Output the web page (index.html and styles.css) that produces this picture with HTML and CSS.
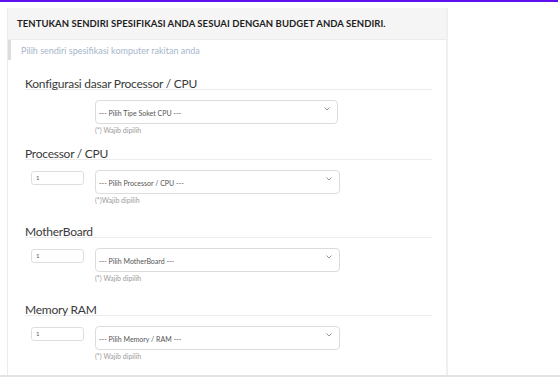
FILE: index.html
```html
<!DOCTYPE html>
<html lang="id">
<head>
<meta charset="utf-8">
<title>Rakit PC</title>
<link rel="stylesheet" href="styles.css">
</head>
<body>
<div class="topbar"></div>
<div class="viewport">
  <div class="panel">
    <div class="panel-heading">TENTUKAN SENDIRI SPESIFIKASI ANDA SESUAI DENGAN BUDGET ANDA SENDIRI.</div>
    <div class="panel-note">Pilih sendiri spesifikasi komputer rakitan anda</div>
    <div class="panel-body">
      <div class="group group-first">
        <h4 class="group-title">Konfigurasi dasar Processor / CPU</h4>
        <div class="row">
          <div class="qty-cell"></div>
          <div class="field field-narrow">
            <div class="select"><span>--- Pilih Tipe Soket CPU ---</span><svg class="chev" viewBox="0 0 6 4" width="6" height="4"><polyline points="0.5,0.5 3,3 5.5,0.5"/></svg></div>
            <div class="hint">(*) Wajib dipilih</div>
          </div>
        </div>
      </div>
      <div class="group">
        <h4 class="group-title">Processor / CPU</h4>
        <div class="row">
          <div class="qty-cell"><div class="qty">1</div></div>
          <div class="field">
            <div class="select"><span>--- Pilih Processor / CPU ---</span><svg class="chev" viewBox="0 0 6 4" width="6" height="4"><polyline points="0.5,0.5 3,3 5.5,0.5"/></svg></div>
            <div class="hint">(*)Wajib dipilih</div>
          </div>
        </div>
      </div>
      <div class="group">
        <h4 class="group-title">MotherBoard</h4>
        <div class="row">
          <div class="qty-cell"><div class="qty">1</div></div>
          <div class="field">
            <div class="select"><span>--- Pilih MotherBoard ---</span><svg class="chev" viewBox="0 0 6 4" width="6" height="4"><polyline points="0.5,0.5 3,3 5.5,0.5"/></svg></div>
            <div class="hint">(*) Wajib dipilih</div>
          </div>
        </div>
      </div>
      <div class="group">
        <h4 class="group-title">Memory RAM</h4>
        <div class="row">
          <div class="qty-cell"><div class="qty">1</div></div>
          <div class="field">
            <div class="select"><span>--- Pilih Memory / RAM ---</span><svg class="chev" viewBox="0 0 6 4" width="6" height="4"><polyline points="0.5,0.5 3,3 5.5,0.5"/></svg></div>
            <div class="hint">(*) Wajib dipilih</div>
          </div>
        </div>
      </div>
    </div>
  </div>
</div>
</body>
</html>
```

FILE: styles.css
```css
* { box-sizing: border-box; }
html, body { margin: 0; padding: 0; background: #fff; }
body {
  font-family: Lato, "Open Sans", "Liberation Sans", sans-serif;
  color: #333;
  width: 560px;
  height: 379px;
  overflow: hidden;
}
.topbar {
  width: 558px;
  height: 2px;
  background: #5f10ee;
}
.viewport {
  height: 375px;
  border-bottom: 2px solid #e3e3e3;
  overflow: hidden;
  padding: 6px 0 0 7px;
}
.panel {
  width: 441px;
  border-left: 1px solid #ececec;
  border-right: 2px solid #efefef;
  min-height: 400px;
}
.panel-heading {
  height: 32px;
  background: #f5f5f5;
  border-bottom: 1px solid #ebebeb;
  padding: 0 9px;
  display: flex;
  align-items: center;
  font-size: 9.5px;
  font-weight: 700;
  color: #1e1e1e;
  letter-spacing: 0.05px;
}
.panel-note {
  height: 20px;
  border-left: 3px solid #dcdcdc;
  padding-left: 10px;
  display: flex;
  align-items: center;
  font-size: 9px;
  color: #a7b6cc;
}
.panel-body {
  padding: 0 14px 0 17px;
}
.group { margin-bottom: 20px; }
.group-first { margin-top: 16px; margin-bottom: 12px; }
.group-title {
  margin: 0;
  font-size: 12px;
  font-weight: 400;
  line-height: 15px;
  height: 14px;
  color: #3a3a3a;
  border-bottom: 1px solid #ececec;
  white-space: nowrap;
  letter-spacing: -0.25px;
}
.row {
  display: flex;
  margin-top: 10px;
}
.qty-cell {
  width: 70px;
  flex: none;
  padding-left: 6px;
  padding-top: 1px;
}
.qty {
  width: 53px;
  height: 14px;
  border: 1px solid #dedede;
  border-radius: 3px;
  font-size: 6px;
  line-height: 12px;
  padding-left: 4px;
  color: #555;
}
.field { width: 245px; }
.field-narrow { width: 243px; }
.select {
  position: relative;
  height: 24px;
  border: 1px solid #dcdcdc;
  border-radius: 4px;
  font-size: 7px;
  color: #555;
  padding: 0 0 0 3px;
  display: flex;
  align-items: center;
  padding-top: 2px;
}
.chev {
  position: absolute;
  right: 7px;
  top: 6px;
  fill: none;
  stroke: #8a8a8a;
  stroke-width: 0.9;
}
.hint {
  margin-top: 2px;
  font-size: 7px;
  line-height: 8px;
  color: #9a9a9a;
}
```
